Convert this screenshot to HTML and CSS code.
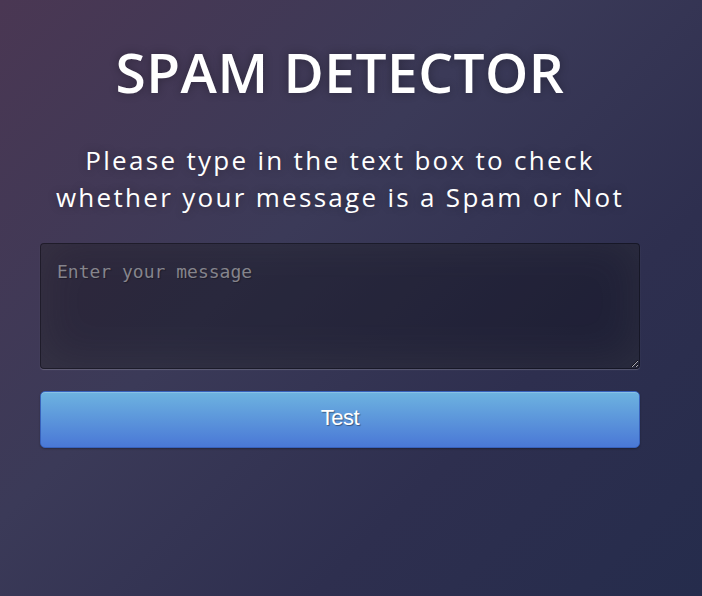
FILE: index.html
```html
<!DOCTYPE html>
<html lang="en">
<head>
<meta charset="utf-8">
<title>Spam Detector</title>
<link rel="stylesheet" href="styles.css">
</head>
<body>
<main class="detector">
  <h1 class="title">SPAM DETECTOR</h1>
  <p class="intro">Please type in the text box to check whether your message is a Spam or Not</p>
  <form class="check-form">
    <textarea class="message" placeholder="Enter your message"></textarea>
    <button type="button" class="btn-test">Test</button>
  </form>
</main>
</body>
</html>
```

FILE: styles.css
```css
html, body {
  margin: 0;
  height: 100%;
}

body {
  background:
    linear-gradient(135deg, #4a3753 0%, #3b3a58 40%, #2e2f4f 70%, #252c4c 100%);
  font-family: "Open Sans", "Noto Sans", sans-serif;
  color: #fff;
  overflow: hidden;
}

.detector {
  width: 600px;
  margin-left: 40px;
  display: flex;
  flex-direction: column;
}

.title {
  margin: 34px 0 0;
  font-size: 55px;
  font-weight: 600;
  line-height: 75px;
  text-align: center;
  letter-spacing: 0.5px;
  text-shadow: 0 0 10px rgba(0, 0, 0, 0.3);
}

.intro {
  margin: 33px 0 0;
  font-size: 26px;
  line-height: 37px;
  letter-spacing: 2.3px;
  text-align: center;
  text-shadow: 0 0 10px rgba(0, 0, 0, 0.3);
}

.check-form {
  display: flex;
  flex-direction: column;
  margin-top: 27px;
}

.message {
  box-sizing: border-box;
  width: 600px;
  height: 126px;
  padding: 17px 16px;
  background: rgba(0, 0, 0, 0.3);
  border: 1px solid rgba(0, 0, 0, 0.3);
  border-radius: 4px;
  box-shadow: inset 0 -5px 45px rgba(100, 100, 100, 0.2), 0 1px 1px rgba(255, 255, 255, 0.2);
  color: #ddd;
  font-family: "DejaVu Sans Mono", "Liberation Mono", monospace;
  font-size: 18px;
  outline: none;
  text-shadow: 1px 1px 1px rgba(0, 0, 0, 0.3);
}

.message::placeholder {
  color: #85848c;
}

.btn-test {
  box-sizing: border-box;
  width: 600px;
  height: 57px;
  margin-top: 22px;
  padding: 0 0 4px;
  background: linear-gradient(#6db3e0, #4a78d6);
  border: 1px solid #3762bc;
  border-radius: 5px;
  box-shadow: inset 0 1px 0 rgba(255, 255, 255, 0.2), 0 1px 2px rgba(0, 0, 0, 0.3);
  color: #fff;
  font-family: "Liberation Sans", Arial, sans-serif;
  font-size: 22px;
  letter-spacing: -0.5px;
  text-shadow: 1px 1px 1px rgba(0, 0, 0, 0.4);
  cursor: pointer;
}
```
